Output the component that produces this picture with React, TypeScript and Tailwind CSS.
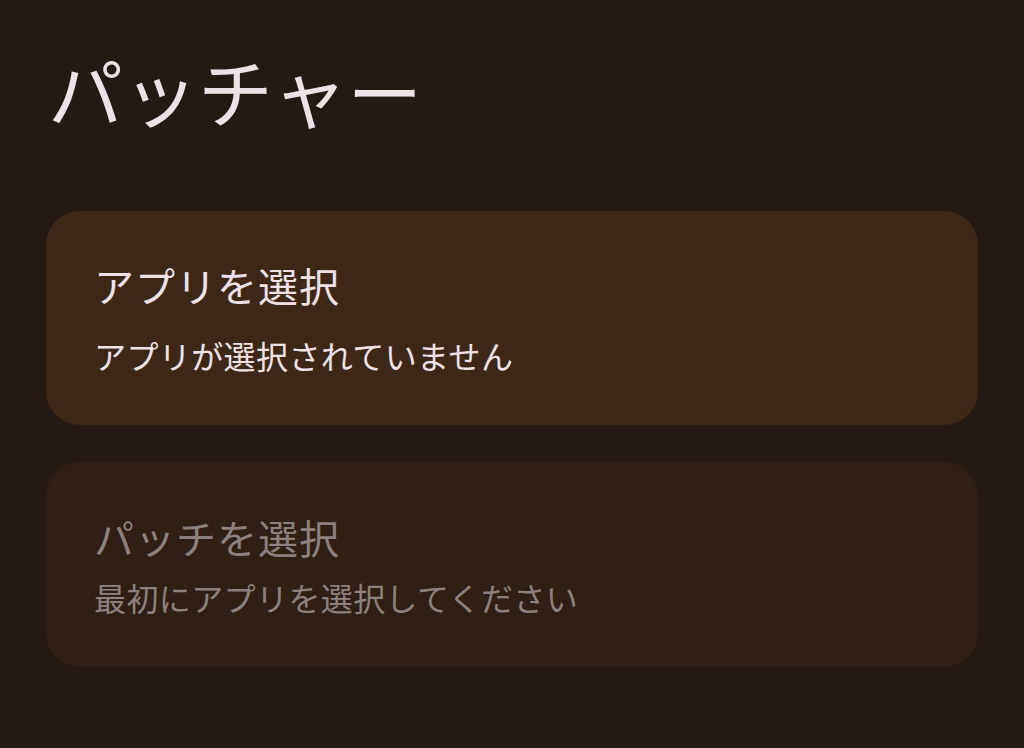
import React from 'react';

interface SelectCardProps {
  title: string;
  subtitle: string;
  enabled?: boolean;
}

function SelectCard({ title, subtitle, enabled = true }: SelectCardProps) {
  return (
    <div
      className={`rounded-[34px] pl-[48px] pr-6 flex flex-col justify-center ${
        enabled ? 'bg-[#3d2818] h-[214px]' : 'bg-[#2f1f14] h-[205px]'
      }`}
    >
      <div
        className={`text-[40px] leading-[52px] tracking-[1px] ${
          enabled ? 'text-[#efe2e6]' : 'text-[#8c817f]'
        }`}
      >
        {title}
      </div>
      <div
        className={`text-[32px] leading-[44px] tracking-[0.4px] ${
          enabled ? 'mt-[22px] text-[#efe2e6]' : 'mt-[12px] text-[#8c817f]'
        }`}
      >
        {subtitle}
      </div>
    </div>
  );
}

export default function App() {
  return (
    <div
      className="w-[1024px] h-[748px] bg-[#251913] overflow-hidden px-[46px]"
      style={{ fontFamily: '"Noto Sans CJK JP", "Noto Sans", sans-serif' }}
    >
      <h1 className="pt-[40px] pl-[2px] text-[75px] leading-[100px] text-[#efe2e6] font-normal">
        パッチャー
      </h1>
      <div className="mt-[71px] flex flex-col gap-[37px]">
        <SelectCard title="アプリを選択" subtitle="アプリが選択されていません" />
        <SelectCard
          title="パッチを選択"
          subtitle="最初にアプリを選択してください"
          enabled={false}
        />
      </div>
    </div>
  );
}
